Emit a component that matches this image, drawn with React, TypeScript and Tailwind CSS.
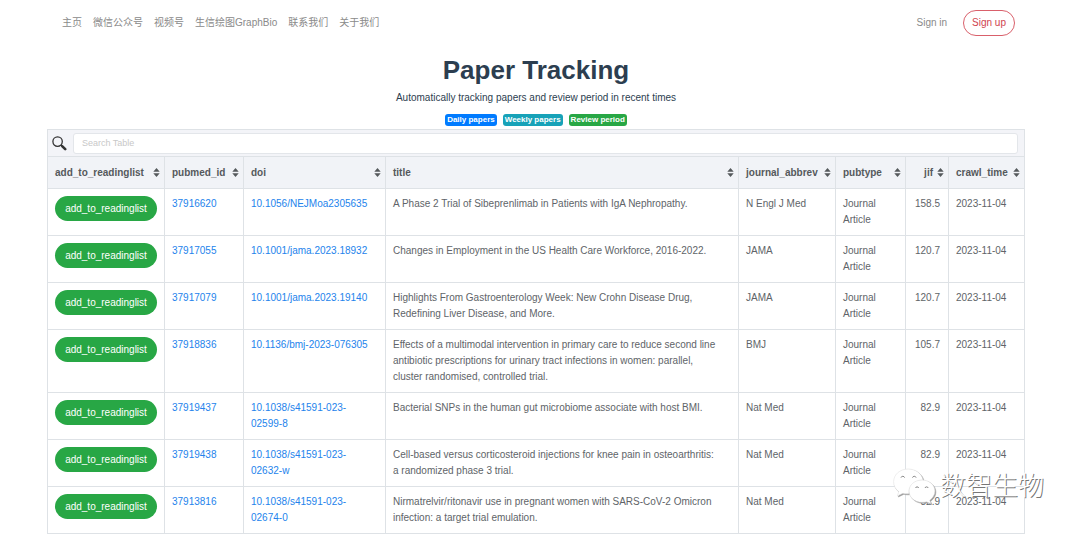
import { useState } from "react";
import clsx from "clsx";

type Paper = {
  pubmedId: string;
  doi: string;
  title: string;
  journal: string;
  jif: string;
};

type Column = {
  name: string;
  width: string;
  alignRight?: boolean;
};

const NAV_LINKS = [
  "主页",
  "微信公众号",
  "视频号",
  "生信绘图GraphBio",
  "联系我们",
  "关于我们",
];

const BADGES = [
  { label: "Daily papers", color: "bg-[#007bff]" },
  { label: "Weekly papers", color: "bg-[#17a2b8]" },
  { label: "Review period", color: "bg-[#28a745]" },
];

const COLUMNS: Column[] = [
  { name: "add_to_readinglist", width: "w-[117px]" },
  { name: "pubmed_id", width: "w-[79px]" },
  { name: "doi", width: "w-[142px]" },
  { name: "title", width: "" },
  { name: "journal_abbrev", width: "w-[97px]" },
  { name: "pubtype", width: "w-[70px]" },
  { name: "jif", width: "w-[43px]", alignRight: true },
  { name: "crawl_time", width: "w-[75px]" },
];

const PAPERS: Paper[] = [
  {
    pubmedId: "37916620",
    doi: "10.1056/NEJMoa2305635",
    title:
      "A Phase 2 Trial of Sibeprenlimab in Patients with IgA Nephropathy.",
    journal: "N Engl J Med",
    jif: "158.5",
  },
  {
    pubmedId: "37917055",
    doi: "10.1001/jama.2023.18932",
    title: "Changes in Employment in the US Health Care Workforce, 2016-2022.",
    journal: "JAMA",
    jif: "120.7",
  },
  {
    pubmedId: "37917079",
    doi: "10.1001/jama.2023.19140",
    title:
      "Highlights From Gastroenterology Week: New Crohn Disease Drug, Redefining Liver Disease, and More.",
    journal: "JAMA",
    jif: "120.7",
  },
  {
    pubmedId: "37918836",
    doi: "10.1136/bmj-2023-076305",
    title:
      "Effects of a multimodal intervention in primary care to reduce second line antibiotic prescriptions for urinary tract infections in women: parallel, cluster randomised, controlled trial.",
    journal: "BMJ",
    jif: "105.7",
  },
  {
    pubmedId: "37919437",
    doi: "10.1038/s41591-023-02599-8",
    title:
      "Bacterial SNPs in the human gut microbiome associate with host BMI.",
    journal: "Nat Med",
    jif: "82.9",
  },
  {
    pubmedId: "37919438",
    doi: "10.1038/s41591-023-02632-w",
    title:
      "Cell-based versus corticosteroid injections for knee pain in osteoarthritis: a randomized phase 3 trial.",
    journal: "Nat Med",
    jif: "82.9",
  },
  {
    pubmedId: "37913816",
    doi: "10.1038/s41591-023-02674-0",
    title:
      "Nirmatrelvir/ritonavir use in pregnant women with SARS-CoV-2 Omicron infection: a target trial emulation.",
    journal: "Nat Med",
    jif: "82.9",
  },
];

function SearchIcon() {
  return (
    <svg viewBox="0 0 15 15" className="size-[15px] shrink-0" aria-hidden="true">
      <circle cx="5.6" cy="5.6" r="4.7" fill="none" stroke="#333" strokeWidth="1.3" />
      <path d="M9 9l1.8 1.8" stroke="#333" strokeWidth="1.3" />
      <path d="M10.4 10.4l2.8 2.8" stroke="#333" strokeWidth="2.6" strokeLinecap="round" />
    </svg>
  );
}

function SortIcon() {
  return (
    <svg viewBox="0 0 7 9" className="h-[9px] w-[7px] shrink-0" aria-hidden="true">
      <path d="M3.5 0L6.7 3.8H0.3z M3.5 9L0.3 5.2h6.4z" fill="#55595c" />
    </svg>
  );
}

function Header() {
  return (
    <header className="flex h-[46px] items-center justify-between pr-[10px] pl-[15px] text-[#8a8a8a]">
      <nav className="flex gap-[11px]">
        {NAV_LINKS.map((label) => (
          <a key={label} href="#" className="whitespace-nowrap">
            {label}
          </a>
        ))}
      </nav>
      <div className="flex items-center gap-4">
        <a href="#">Sign in</a>
        <a
          href="#"
          className="flex h-[26px] items-center rounded-full border border-[#d9606b] px-2 text-[#d0434f]"
        >
          Sign up
        </a>
      </div>
    </header>
  );
}

function PaperRow({ paper, last }: { paper: Paper; last: boolean }) {
  const cell = clsx(
    "border-r border-[#dee2e6] py-[7px] pl-[7px]",
    !last && "border-b"
  );

  return (
    <tr className="align-top">
      <td className={clsx(cell, "pr-[7px]")}>
        <button
          type="button"
          className="block h-[25px] w-full rounded-full bg-[#28a745] text-white"
        >
          add_to_readinglist
        </button>
      </td>
      <td className={clsx(cell, "pr-[7px]")}>
        <a href="#" className="text-[#2383ec]">
          {paper.pubmedId}
        </a>
      </td>
      <td className={clsx(cell, "pr-4")}>
        <a href="#" className="text-[#2383ec]">
          {paper.doi}
        </a>
      </td>
      <td className={clsx(cell, "pr-5")}>{paper.title}</td>
      <td className={clsx(cell, "pr-[7px]")}>{paper.journal}</td>
      <td className={clsx(cell, "pr-[7px]")}>Journal Article</td>
      <td className={clsx(cell, "pr-2 text-right")}>{paper.jif}</td>
      <td className={clsx(cell, "border-r-0 pr-[7px]")}>2023-11-04</td>
    </tr>
  );
}

function PaperTable() {
  const [search, setSearch] = useState("");
  const query = search.toLowerCase();
  const papers = PAPERS.filter((paper) =>
    Object.values(paper).some((value) => value.toLowerCase().includes(query))
  );

  return (
    <section className="mt-[3px] border border-[#dee2e6]">
      <div className="flex h-[27px] items-center gap-[6px] border-b border-[#dee2e6] bg-[#f3f4f8] pr-[6px] pl-1">
        <label htmlFor="search">
          <SearchIcon />
        </label>
        <input
          id="search"
          type="text"
          aria-label="Search Table"
          placeholder="Search Table"
          value={search}
          onChange={(e) => setSearch(e.target.value)}
          className="h-[21px] min-w-0 flex-1 rounded-[3px] border border-[#e3e6ea] bg-white px-2 text-[9px] outline-none placeholder:text-[#c8c8c8]"
        />
      </div>
      <table className="w-full table-fixed border-separate border-spacing-0">
        <thead className="bg-[#f1f3f7] text-[#55595c]">
          <tr>
            {COLUMNS.map((column, i) => (
              <th
                key={column.name}
                className={clsx(
                  "h-8 border-b border-[#dee2e6] p-0",
                  i < COLUMNS.length - 1 && "border-r",
                  column.width
                )}
              >
                <button
                  type="button"
                  className={clsx(
                    "flex w-full items-center gap-1 pr-1 pl-[7px] font-bold",
                    column.alignRight ? "justify-end" : "justify-between"
                  )}
                >
                  {column.name}
                  <SortIcon />
                </button>
              </th>
            ))}
          </tr>
        </thead>
        <tbody>
          {papers.map((paper, i) => (
            <PaperRow
              key={paper.pubmedId}
              paper={paper}
              last={i === papers.length - 1}
            />
          ))}
        </tbody>
      </table>
    </section>
  );
}

function Watermark() {
  return (
    <div className="pointer-events-none absolute right-9 bottom-[30px] flex items-center gap-1">
      <svg
        viewBox="0 0 43 36"
        className="h-9 w-[43px] drop-shadow-[1px_1px_0px_#999999]"
        aria-hidden="true"
      >
        <path
          d="M15 1C7 1 .6 6.600.6 13.800c0 4.200 2 7.600 5.200 9.900L4.300 28l5.600-2.700c2 .5 4.100.7 6.100.3C15.500 18 21 12.500 30 12 28.800 5.500 22.500 1 15 1z"
          fill="#fff"
          stroke="#dcdcdc"
          strokeWidth=".5"
        />
        <path
          d="M29 12c-7.400 0-13 4.900-13 11.100S21.600 34.300 29 34.300c1.600 0 3.100-.2 4.500-.6l4.300 1.800-1.100-3.300c3.200-2.200 5.200-5.400 5.200-9.100C41.900 16.900 36.300 12 29 12z"
          fill="#fff"
          stroke="#dcdcdc"
          strokeWidth=".5"
        />
        <g fill="none" stroke="#777" strokeWidth=".9">
          <path d="M8 9.600a1.900 1.900 0 0 1 3.600 0M19.500 9.600a1.900 1.900 0 0 1 3.600 0" />
          <path d="M22.500 20a1.700 1.700 0 0 1 3.200 0M32 20a1.700 1.700 0 0 1 3.200 0" />
        </g>
      </svg>
      <span className="text-[26px] leading-8 font-light text-white [text-shadow:1px_1px_0px_#777777]">
        数智生物
      </span>
    </div>
  );
}

function App() {
  return (
    <main className="relative bg-white pr-[55px] pl-[47px] font-['Liberation_Sans','Noto_Sans_CJK_SC',sans-serif] text-[10px] leading-4 text-[#606468]">
      <Header />
      <div className="mt-2 flex flex-col items-center text-[#2c3e50]">
        <h1 className="text-[26px] leading-8 font-bold">Paper Tracking</h1>
        <p className="mt-1">
          Automatically tracking papers and review period in recent times
        </p>
        <div className="mt-2 flex gap-[6px]">
          {BADGES.map((badge) => (
            <a
              key={badge.label}
              href="#"
              className={clsx(
                "rounded-[3px] px-[2px] text-[8px] leading-3 font-bold text-white",
                badge.color
              )}
            >
              {badge.label}
            </a>
          ))}
        </div>
      </div>
      <PaperTable />
      <Watermark />
    </main>
  );
}

export default App;
